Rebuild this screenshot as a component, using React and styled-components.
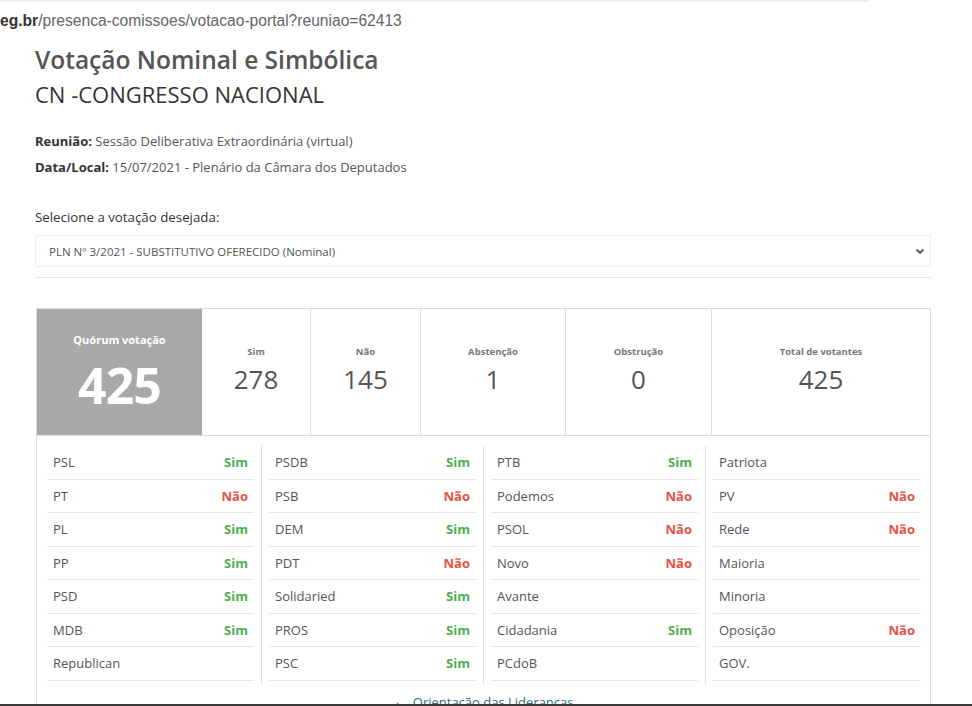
import React from 'react';
import styled, { createGlobalStyle } from 'styled-components';

const GlobalStyle = createGlobalStyle`
  html, body {
    margin: 0;
    padding: 0;
    background: #fff;
    overflow: hidden;
  }
  body {
    font-family: "Open Sans", "Liberation Sans", Arial, sans-serif;
    color: #555;
  }
`;

const stats = [
  { label: 'Sim', value: 278 },
  { label: 'Não', value: 145 },
  { label: 'Abstenção', value: 1 },
  { label: 'Obstrução', value: 0 },
  { label: 'Total de votantes', value: 425 },
];

const parties = [
  [
    ['PSL', 'Sim'], ['PT', 'Não'], ['PL', 'Sim'], ['PP', 'Sim'],
    ['PSD', 'Sim'], ['MDB', 'Sim'], ['Republican', ''],
  ],
  [
    ['PSDB', 'Sim'], ['PSB', 'Não'], ['DEM', 'Sim'], ['PDT', 'Não'],
    ['Solidaried', 'Sim'], ['PROS', 'Sim'], ['PSC', 'Sim'],
  ],
  [
    ['PTB', 'Sim'], ['Podemos', 'Não'], ['PSOL', 'Não'], ['Novo', 'Não'],
    ['Avante', ''], ['Cidadania', 'Sim'], ['PCdoB', ''],
  ],
  [
    ['Patriota', ''], ['PV', 'Não'], ['Rede', 'Não'], ['Maioria', ''],
    ['Minoria', ''], ['Oposição', 'Não'], ['GOV.', ''],
  ],
];

function App() {
  return (
    <>
      <GlobalStyle />
      <UrlBar>
        <strong>eg.br</strong>/presenca-comissoes/votacao-portal?reuniao=62413
      </UrlBar>
      <Page>
        <Title>Votação Nominal e Simbólica</Title>
        <SubTitle>CN -CONGRESSO NACIONAL</SubTitle>

        <Info>
          <InfoLine><b>Reunião:</b> Sessão Deliberativa Extraordinária (virtual)</InfoLine>
          <InfoLine><b>Data/Local:</b> 15/07/2021 - Plenário da Câmara dos Deputados</InfoLine>
        </Info>

        <SelectLabel>Selecione a votação desejada:</SelectLabel>
        <SelectBox>
          <span>PLN Nº 3/2021 - SUBSTITUTIVO OFERECIDO (Nominal)</span>
          <svg width="10" height="7" viewBox="0 0 10 7">
            <path d="M1.5 1.5 L5 5 L8.5 1.5" fill="none" stroke="#555" strokeWidth="1.8" />
          </svg>
        </SelectBox>
        <Divider />

        <Panel>
          <StatsRow>
            <Quorum>
              <QuorumLabel>Quórum votação</QuorumLabel>
              <QuorumValue>425</QuorumValue>
            </Quorum>
            {stats.map((s) => (
              <StatCell key={s.label}>
                <StatLabel>{s.label}</StatLabel>
                <StatValue>{s.value}</StatValue>
              </StatCell>
            ))}
          </StatsRow>

          <PartyGrid>
            {parties.map((col, i) => (
              <PartyColumn key={i} $last={i === parties.length - 1}>
                {col.map(([name, vote]) => (
                  <PartyRow key={name}>
                    <span>{name}</span>
                    {vote && <Vote $yes={vote === 'Sim'}>{vote}</Vote>}
                  </PartyRow>
                ))}
              </PartyColumn>
            ))}
          </PartyGrid>

          <Toggle>
            <span>▲</span> Orientação das Lideranças
          </Toggle>
        </Panel>
      </Page>
      <ScreenEdge />
    </>
  );
}

export default App;

const UrlBar = styled.div`
  width: 868px;
  border-top: 2px solid #ececec;
  padding-top: 9px;
  height: 20px;
  line-height: 20px;
  font-family: "Liberation Sans", Arial, sans-serif;
  font-size: 15.6px;
  color: #666;
  white-space: nowrap;

  strong {
    color: #333;
    font-weight: 700;
  }
`;

const Page = styled.div`
  width: 896px;
  margin-left: 35px;
`;

const Title = styled.h1`
  margin: 13px 0 0;
  font-size: 24.5px;
  font-weight: 600;
  color: #555;
  line-height: 32px;
`;

const SubTitle = styled.h2`
  margin: 4px 0 0;
  font-size: 22px;
  font-weight: 400;
  color: #333;
  line-height: 28px;
`;

const Info = styled.div`
  margin-top: 25px;
  display: flex;
  flex-direction: column;
  gap: 9px;
`;

const InfoLine = styled.div`
  font-size: 13px;
  line-height: 17px;
  color: #555;

  b {
    color: #333;
    font-weight: 700;
  }
`;

const SelectLabel = styled.div`
  margin-top: 32px;
  font-size: 13.3px;
  line-height: 18px;
  color: #333;
`;

const SelectBox = styled.div`
  margin-top: 9px;
  height: 32px;
  box-sizing: border-box;
  border: 1px solid #eee;
  border-radius: 2px;
  display: flex;
  align-items: center;
  justify-content: space-between;
  padding: 0 5px 0 13px;
  font-size: 11.5px;
  color: #555;
`;

const Divider = styled.div`
  margin-top: 10px;
  border-top: 1px solid #e6e6e6;
`;

const Panel = styled.div`
  margin-top: 30px;
  margin-left: 1px;
  width: 895px;
  box-sizing: border-box;
  border: 1px solid #ddd;
  border-bottom: none;
`;

const StatsRow = styled.div`
  display: grid;
  grid-template-columns: 165px 108px 110px 145px 146px 1fr;
  height: 126px;
  border-bottom: 1px solid #ddd;
`;

const Quorum = styled.div`
  background: #a9a9a9;
  color: #fff;
  display: flex;
  flex-direction: column;
  align-items: center;
  padding-top: 23px;
`;

const QuorumLabel = styled.div`
  font-size: 11px;
  font-weight: 700;
  line-height: 16px;
`;

const QuorumValue = styled.div`
  font-size: 50px;
  font-weight: 700;
  line-height: 56px;
  margin-top: 9px;
  letter-spacing: -1px;
`;

const StatCell = styled.div`
  border-left: 1px solid #ddd;
  display: flex;
  flex-direction: column;
  align-items: center;
  padding-top: 38px;
  &:nth-child(2) {
    border-left: none;
  }
`;

const StatLabel = styled.div`
  font-size: 9.5px;
  font-weight: 700;
  color: #777;
  line-height: 10px;
`;

const StatValue = styled.div`
  font-size: 26px;
  color: #555;
  line-height: 34px;
  margin-top: 5px;
`;

const PartyGrid = styled.div`
  display: grid;
  grid-template-columns: repeat(4, 1fr);
  padding: 10px 2px 0 3px;
`;

const PartyColumn = styled.div`
  padding: 0 7px;
  border-right: ${(p) => (p.$last ? 'none' : '1px solid #ddd')};
  padding-bottom: 3px;
`;

const PartyRow = styled.div`
  height: 32.5px;
  border-bottom: 1px solid #e6e6e6;
  display: flex;
  align-items: center;
  justify-content: space-between;
  padding: 0 6px;
  font-size: 13px;
  line-height: 18px;
  color: #555;
`;

const Vote = styled.span`
  font-weight: 700;
  color: ${(p) => (p.$yes ? '#4caf50' : '#e8503f')};
`;

const Toggle = styled.div`
  margin-top: 8.5px;
  text-align: center;
  font-size: 13px;
  line-height: 20px;
  color: #2e6f78;

  span {
    font-size: 8px;
    margin-right: 8px;
  }
`;

const ScreenEdge = styled.div`
  position: fixed;
  left: 0;
  right: 0;
  bottom: 0;
  height: 2px;
  background: #3b3b3b;
`;
